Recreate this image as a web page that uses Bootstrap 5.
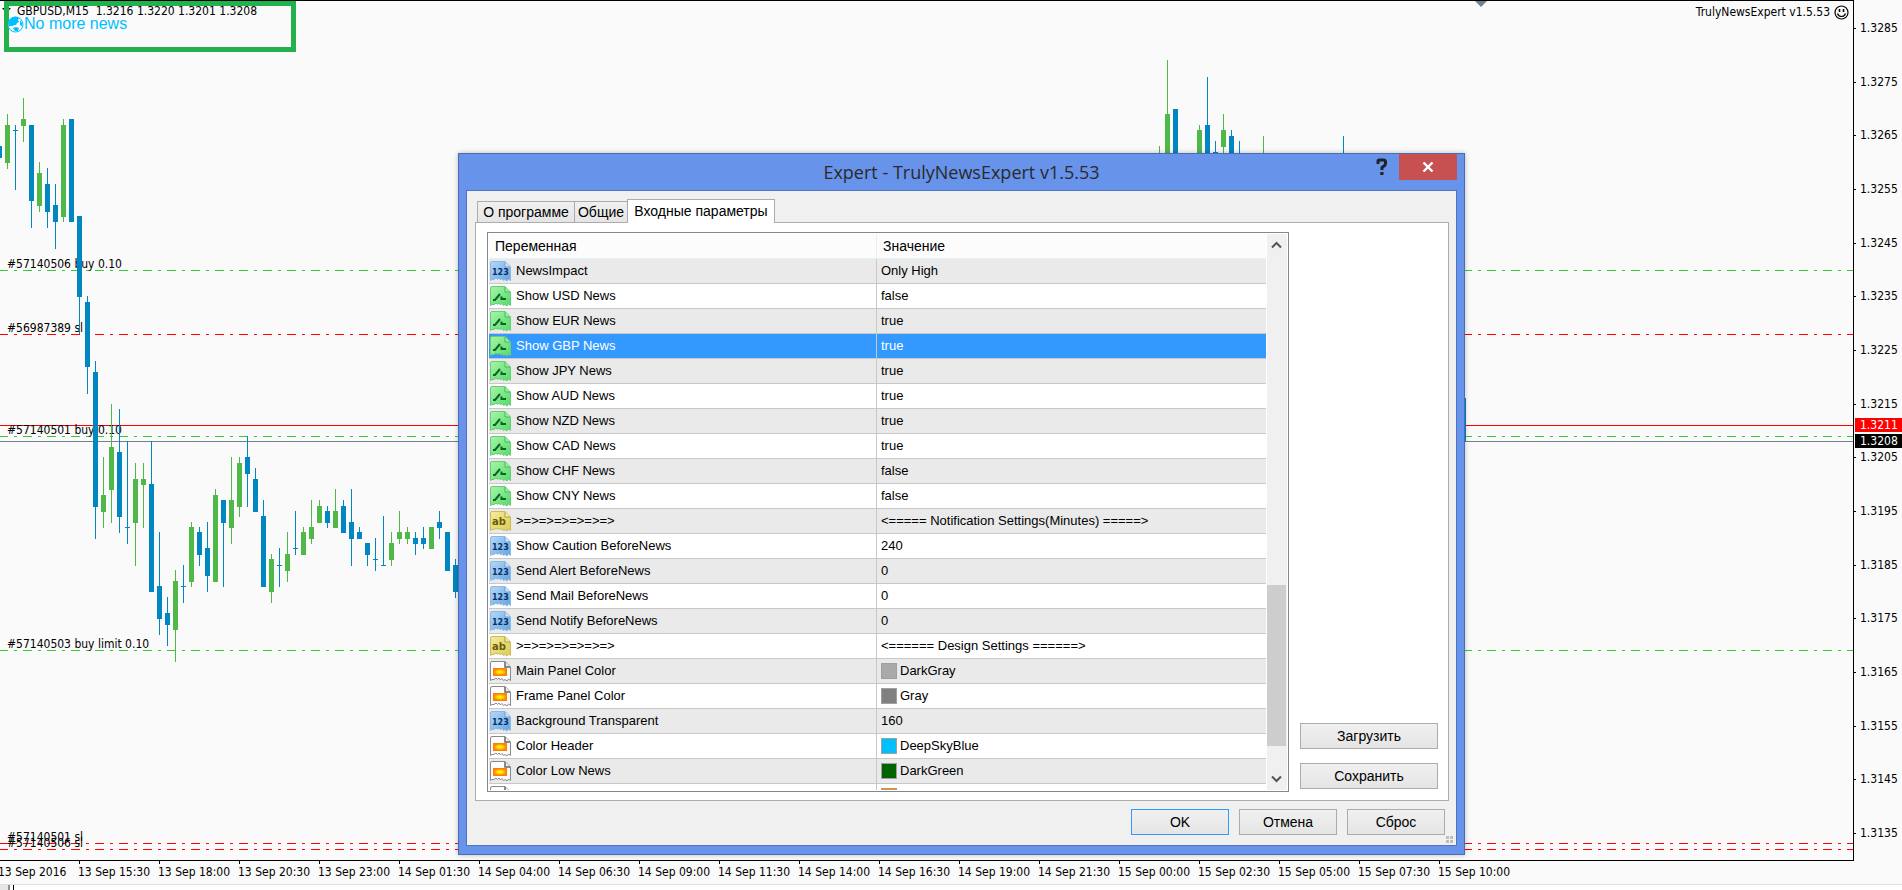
<!DOCTYPE html>
<html lang="ru">
<head>
<meta charset="utf-8">
<meta name="viewport" content="width=device-width, initial-scale=1">
<title>GBPUSD,M15</title>
<link href="https://cdn.jsdelivr.net/npm/bootstrap@5.3.0/dist/css/bootstrap.min.css" rel="stylesheet">
<style>
  body { font-family: "DejaVu Sans Condensed", "DejaVu Sans", sans-serif; font-size: 12px; line-height: 16px; color: #000; background: #fafafa; }
  .plot { border-top: 1px solid #000; border-right: 1px solid #000; border-bottom: 1px solid #000; min-width: 0; }
  .plot-canvas { position: absolute; inset: 0; width: 100%; height: 100%; }
  .plot-canvas text { font-size: 12px; }
  .plot-canvas .level { stroke-width: 1; stroke-dasharray: 9 6 3 6; stroke-dashoffset: 1; }
  .up { fill: #4fb848; }
  .down { fill: #0087c1; }
  .buy { stroke: #32cd32; }
  .stop { stroke: #f00; }
  .quote { left: 17px; top: 2px; white-space: pre; }
  .news-frame { left: 4px; top: 0; width: 292px; height: 51px; border: 5px solid #22b14c; }
  .news-line { left: 7px; top: 13px; font: 16px/20px "Liberation Sans", Arial, sans-serif; color: #00bfff; }
  .menu-mark { left: 2px; top: 7px; }
  .shift-mark { left: 1475px; top: 0; }
  .expert-name { right: 4px; top: 3px; }
  .prices { width: 48px; padding: 20px 0; }
  .prices span { padding-left: 6px; position: relative; }
  .prices span::before { content: ""; position: absolute; left: 0; top: 8px; width: 2px; height: 1px; background: #000; }
  .price-tag { position: absolute; left: 1px; right: 0; height: 14px; line-height: 14px; padding-left: 5px; color: #fff; }
  .ask { top: 418px; background: #f00; }
  .bid { top: 434px; background: #000; }
  .times { height: 23px; margin-left: -2px; overflow: hidden; }
  .times span { width: 80px; flex: none; padding-top: 3px; position: relative; white-space: nowrap; }
  .times span + span::before { content: ""; position: absolute; left: 1px; top: 0; width: 1px; height: 3px; background: #000; }
  .bottom-strip { height: 6px; border-top: 1px solid #e0e0e0; background: #fff; }
  .bottom-strip i { width: 10px; background: #e6e6e6; border-right: 2px solid #909090; }
  .bottom-strip b { width: 1px; margin-left: 3px; background: #000; }

  .dlg { position: absolute; left: 458px; top: 153px; width: 1007px; background: #6793ea; border: 1px solid #4a6cb5; box-shadow: 0 0 5px rgba(0,0,0,.25); padding: 0 7px 8px; font-family: "Liberation Sans", Arial, sans-serif; font-size: 13px; }
  .dlg-head { height: 36px; }
  .dlg-title { font: 18px/36px "Open Sans", "Noto Sans", sans-serif; color: #2a2a2a; }
  .dlg-tools { position: absolute; right: 7px; top: 0; }
  .plain { border: 0; padding: 0; background: none; border-radius: 0; display: flex; align-items: center; justify-content: center; }
  .help { width: 22px; height: 26px; margin-right: 6px; }
  .dlg-close { width: 58px; height: 26px; background: #c75050; }
  .dlg-body { border: 1px solid #4f74c4; background: #f0f0f0; padding: 8px 7px 10px 8px; height: 656px; position: relative; }
  .tabs { padding-left: 2px; height: 23px; }
  .tab-btn { font-size: 14px; height: 21px; padding: 0; border: 1px solid #acacac; border-bottom: 0; background: linear-gradient(#f0f0f0, #e5e5e5); border-radius: 0; color: #000; text-align: center; line-height: 20px; }
  .t1 { width: 98px; margin-right: -1px; }
  .t2 { width: 54px; }
  .t3 { width: 148px; height: 24px; margin: 0 0 -1px -1px; background: #fff; z-index: 1; padding-bottom: 2px; }
  .pane { border: 1px solid #acacac; background: #fff; height: 579px; padding: 9px 10px 8px 11px; gap: 11px; }
  .grid-box { width: 802px; border: 1px solid #828790; padding: 1px; overflow: hidden; height: 560px; }
  .grid-scroll { overflow: hidden; width: 778px; height: 556px; }
  .params { table-layout: fixed; width: 778px; margin: 0; border-collapse: separate; border-spacing: 0; font-size: 13px; line-height: 20px; color: #000; }
  .params th { height: 25px; font-size: 14px; font-weight: 400; padding: 2px 0 2px 6px; background: #fcfcfc; border: 0; border-bottom: 1px solid #e3f1fa; border-right: 1px solid #e3f1fa; line-height: 20px; }
  .params td { height: 25px; padding: 0 0 0 4px; border: 0; border-bottom: 1px solid #c8c8c8; white-space: nowrap; background: #fff; color: #000; vertical-align: middle; }
  .params td:first-child { padding-left: 1px; border-right: 1px solid #c8c8c8; }
  .params tbody tr:nth-child(odd) td { background: #eaeaea; }
  .params tbody tr.picked td { background: #3399ff; color: #fff; }
  .params tr:last-child td { background: #fff; }
  .params svg { margin-right: 5px; flex: none; }
  .swatch { width: 16px; height: 16px; border: 1px solid #a0a0a0; margin-right: 3px; }
  .vbar { width: 20px; margin-left: 1px; background: #f0f0f0; }
  .vbar button { height: 22px; width: 19px; }
  .thumb { width: 19px; height: 161px; margin-top: 329px; background: #cdcdcd; }
  .push { font-size: 14px; line-height: 20px; height: 26px; padding: 0; border: 1px solid #acacac; border-radius: 0; background: linear-gradient(#f0f0f0, #e5e5e5); color: #000; }
  .side { gap: 14px; padding-bottom: 3px; width: 138px; }
  .foot { gap: 10px; padding: 8px 4px 0 0; }
  .foot .push { width: 98px; }
  .foot .ok { border-color: #3399ff; }
  .grip { position: absolute; right: 3px; bottom: 2px; }
</style>
</head>
<body class="vh-100 d-flex flex-column overflow-hidden position-relative">

<svg class="position-absolute" width="0" height="0" aria-hidden="true">
  <defs>
    <linearGradient id="gBlue" x2="1" y2="1"><stop offset="0" stop-color="#b4d8f8"/><stop offset="1" stop-color="#62a4e2"/></linearGradient>
    <linearGradient id="gGreen" x2="1" y2="1"><stop offset="0" stop-color="#a6f5a9"/><stop offset="1" stop-color="#55da6b"/></linearGradient>
    <linearGradient id="gYellow" x2="1" y2="1"><stop offset="0" stop-color="#f4eb9c"/><stop offset="1" stop-color="#dccb58"/></linearGradient>
    <radialGradient id="gSun"><stop offset="0" stop-color="#ffff20"/><stop offset=".5" stop-color="#ffd800"/><stop offset="1" stop-color="#ff8a00"/></radialGradient>
  </defs>
  <symbol id="sheet" viewBox="0 0 21 21">
    <path d="M.5 2Q.5.5 2 .5H15L20.500 6V19.500L18.500 18 17 20 15 18.500 13.500 19.500 12 17.500 10.500 19 9 17 7.500 18.500 6 17 4 18.500 2 18.500.5 19.500Z"/>
  </symbol>
  <symbol id="i-num" viewBox="0 0 21 21">
    <use href="#sheet" width="21" height="21" fill="url(#gBlue)" stroke="#8db9e2"/>
    <path d="M15 .8V6H20" fill="#cfe5f9" stroke="#6fa3d3"/>
    <text x="2" y="14" font-family="DejaVu Sans" font-weight="700" font-size="8" fill="#0b2f63">123</text>
  </symbol>
  <symbol id="i-bool" viewBox="0 0 21 21">
    <use href="#sheet" width="21" height="21" fill="url(#gGreen)" stroke="#6bcb78"/>
    <path d="M15 .8V6H20" fill="#9aeea2" stroke="#4fb660"/>
    <path d="M3 14H5L10 8M11.500 10.500V13H16" fill="none" stroke="#0b6420" stroke-width="2"/>
  </symbol>
  <symbol id="i-str" viewBox="0 0 21 21">
    <use href="#sheet" width="21" height="21" fill="url(#gYellow)" stroke="#cbbb5a"/>
    <path d="M15 .8V6H20" fill="#f5eda9" stroke="#b09f38"/>
    <text x="2" y="14" font-family="DejaVu Sans" font-weight="700" font-size="10" fill="#6a5a0c">ab</text>
  </symbol>
  <symbol id="i-color" viewBox="0 0 21 21">
    <use href="#sheet" width="21" height="21" fill="#fcfcfc" stroke="#8a8a8a"/>
    <path d="M15 .8V6H20" fill="#eee" stroke="#666" stroke-width="1.500"/>
    <rect x="3" y="7" width="14" height="8" fill="#ff7a10"/><rect x="4" y="8" width="12" height="6" fill="url(#gSun)"/>
  </symbol>
</svg>

<main class="d-flex flex-grow-1">
  <section class="plot flex-grow-1 position-relative overflow-hidden">
    <svg class="plot-canvas" id="canvas" shape-rendering="crispEdges"></svg>
    <svg class="menu-mark position-absolute" width="9" height="5"><path d="M0 0H9L4.500 5Z"/></svg>
    <svg class="shift-mark position-absolute" width="12" height="6"><path d="M0 0H12L6 6Z" fill="#708090"/></svg>
    <div class="news-frame position-absolute"></div>
    <div class="quote position-absolute">GBPUSD,M15  1.3216 1.3220 1.3201 1.3208</div>
    <div class="news-line position-absolute d-flex align-items-center">
      <svg width="17" height="17" viewBox="0 0 17 17"><circle cx="8.500" cy="8.500" r="7.500" fill="#fafafa" stroke="#00bfff"/><path d="M1.500 10Q.5 4 5 1.500Q9 0 12 2L11 4 12 6 10 7 9 9 7 9 6 10ZM13 4L15 7 15 10 13 9ZM6 12L9 11 12 12 11 15 8 15Z" fill="#00bfff"/></svg>
      <span>No more news</span>
    </div>
    <div class="expert-name position-absolute d-flex gap-1 align-items-center">
      <span>TrulyNewsExpert v1.5.53</span>
      <svg width="15" height="15" viewBox="0 0 15 15" fill="none" stroke="#000"><circle cx="7.500" cy="7.500" r="6.500" stroke-width="1.200"/><path d="M3.500 8.500Q4.500 11.500 7.500 11.500T11.500 8.500" stroke-width="1.200"/><path d="M5.500 4V7M9.500 4V7" stroke-width="1.600"/></svg>
    </div>
  </section>
  <aside class="prices d-flex flex-column justify-content-between position-relative" id="prices">
    <div class="price-tag ask">1.3211</div>
    <div class="price-tag bid">1.3208</div>
  </aside>
</main>
<div class="times d-flex" id="times"></div>
<div class="bottom-strip d-flex"><i></i><b></b></div>

<div class="dlg" role="dialog" aria-labelledby="dlgTitle">
  <header class="dlg-head text-center">
    <div class="dlg-title" id="dlgTitle">Expert - TrulyNewsExpert v1.5.53</div>
    <div class="dlg-tools d-flex">
      <button class="plain help" aria-label="Help"><svg width="12" height="18" viewBox="0 0 12 18"><path d="M2 6V3.500Q2 2 3.500 2H7.500Q9.500 2 9.500 4V5.500Q9.500 7 8 8L6 9.500V12" fill="none" stroke="#222" stroke-width="3"/><path d="M4.300 14H7.500V17H4.300Z" fill="#222"/></svg></button>
      <button class="plain dlg-close" aria-label="Close"><svg width="12" height="10" viewBox="0 0 12 10"><path d="M1.500.5L10.500 9.500M10.500.5L1.500 9.500" stroke="#fff" stroke-width="2.400"/></svg></button>
    </div>
  </header>
  <div class="dlg-body">
    <nav class="tabs d-flex align-items-end" role="tablist">
      <button class="tab-btn t1" role="tab">О программе</button>
      <button class="tab-btn t2" role="tab">Общие</button>
      <button class="tab-btn t3" role="tab" aria-selected="true">Входные параметры</button>
    </nav>
    <div class="pane d-flex">
      <div class="grid-box d-flex">
        <div class="grid-scroll">
          <table class="params">
            <colgroup><col style="width:388px"><col></colgroup>
            <thead><tr><th>Переменная</th><th>Значение</th></tr></thead>
            <tbody id="rows"></tbody>
          </table>
        </div>
        <div class="vbar d-flex flex-column">
          <button class="plain" aria-label="Up"><svg width="11" height="8" viewBox="0 0 11 8"><path d="M1 6.500L5.500 2 10 6.500" fill="none" stroke="#555" stroke-width="2"/></svg></button>
          <div class="thumb"></div>
          <button class="plain mt-auto" aria-label="Down"><svg width="11" height="8" viewBox="0 0 11 8"><path d="M1 1.500L5.500 6 10 1.500" fill="none" stroke="#555" stroke-width="2"/></svg></button>
        </div>
      </div>
      <div class="side d-flex flex-column justify-content-end">
        <button class="push">Загрузить</button>
        <button class="push">Сохранить</button>
      </div>
    </div>
    <footer class="foot d-flex justify-content-end">
      <button class="push ok">OK</button>
      <button class="push">Отмена</button>
      <button class="push">Сброс</button>
    </footer>
    <svg class="grip" width="7" height="7" fill="#bfbfbf"><path d="M0 0H3V3H0ZM4 0H7V3H4ZM0 4H3V7H0ZM4 4H7V7H4Z"/></svg>
  </div>
</div>

<script>
// Order levels: y, kind, caption
const levels = [
  [270, 'buy', '#57140506 buy 0.10'], [334, 'stop', '#56987389 sl'], [436, 'buy', '#57140501 buy 0.10'],
  [650, 'buy', '#57140503 buy limit 0.10'], [843, 'stop', '#57140501 sl'], [849, 'stop', '#57140506 sl']];
// Candles: slot, direction, high, low, body top, body bottom
const candles = [
  [-1,'d',146,158,146,158],[0,'u',114,169,125,163],[1,'d',125,190,130,131],[2,'u',98,142,119,126],[3,'d',125,228,125,201],
  [4,'u',162,212,173,206],[5,'d',168,228,184,212],[6,'d',184,249,205,222],[7,'u',119,222,125,217],[8,'d',119,222,119,222],
  [9,'d',216,334,216,297],[10,'d',296,394,302,367],[11,'d',361,539,372,507],[12,'u',457,528,495,512],[13,'u',404,523,447,490],
  [14,'d',409,533,452,517],[15,'d',441,544,527,528],[16,'u',463,566,479,523],[17,'u',463,528,479,485],[18,'d',441,592,484,592],
  [19,'d',532,635,586,619],[20,'d',597,646,613,625],[21,'u',570,662,581,630],[22,'d',565,603,586,587],[23,'u',522,587,527,582],
  [24,'d',527,566,532,555],[25,'d',522,592,548,576],[26,'u',489,582,495,582],[27,'d',500,587,500,523],[28,'u',457,544,500,528],
  [29,'u',457,517,463,507],[30,'d',436,507,457,474],[31,'d',468,512,479,512],[32,'d',500,587,516,587],[33,'u',554,603,559,592],
  [34,'d',548,587,565,566],[35,'u',532,582,554,571],[36,'d',511,555,548,549],[37,'u',527,555,532,555],[38,'u',500,544,527,539],
  [39,'u',500,523,506,523],[40,'d',506,528,511,523],[41,'u',489,528,511,528],[42,'d',500,533,506,533],[43,'d',489,566,522,539],
  [44,'d',527,539,532,539],[45,'d',543,566,543,555],[46,'d',538,571,559,560],[47,'d',516,566,565,566],[48,'u',532,566,543,560],
  [49,'u',511,544,532,539],[50,'u',527,544,532,539],[51,'d',532,555,538,544],[52,'d',527,549,538,544],[53,'u',527,549,527,549],
  [54,'d',511,539,522,528],[55,'d',532,571,532,571],[56,'d',559,598,565,592],
  [144,'u',146,170,158,170],[145,'u',60,170,114,170],[146,'d',109,170,109,170],[149,'u',125,170,130,170],[150,'d',77,170,125,170],
  [151,'d',141,170,152,170],[152,'u',114,170,130,147],[153,'d',130,170,136,170],[154,'d',141,170,158,170],[157,'u',136,170,158,170],
  [167,'d',136,170,158,170],[182,'d',398,441,398,441]];

// The plot has a one-pixel top border, so canvas y is one less than chart y
let svg = '<g transform="translate(0 -1)">';
for (const [y, kind] of levels) svg += `<line class="level ${kind}" x1="0" x2="100%" y1="${y + .5}" y2="${y + .5}"/>`;
svg += '<rect width="100%" height="1" y="425" fill="#f00"/><rect width="100%" height="1" y="441" fill="#708090"/>';
for (const [y, , label] of levels) svg += `<text x="7" y="${y - 2}">${label}</text>`;
for (const [k, dir, hi, lo, top, bottom] of candles) {
  const x = 7 + 8 * k, c = dir === 'u' ? 'up' : 'down';
  svg += `<rect class="${c}" x="${x}" y="${hi}" width="1" height="${lo - hi}"/><rect class="${c}" x="${x - 2}" y="${top}" width="5" height="${bottom - top}"/>`;
}
document.getElementById('canvas').innerHTML = svg + '</g>';

let prices = '';
for (let p = 13285; p >= 13135; p -= 10) prices += `<span>${(p / 10000).toFixed(4)}</span>`;
document.getElementById('prices').insertAdjacentHTML('afterbegin', prices);

document.getElementById('times').innerHTML = ['13 Sep 2016','13 Sep 15:30','13 Sep 18:00','13 Sep 20:30','13 Sep 23:00',
  '14 Sep 01:30','14 Sep 04:00','14 Sep 06:30','14 Sep 09:00','14 Sep 11:30','14 Sep 14:00','14 Sep 16:30','14 Sep 19:00','14 Sep 21:30',
  '15 Sep 00:00','15 Sep 02:30','15 Sep 05:00','15 Sep 07:30','15 Sep 10:00'].map(t => `<span>${t}</span>`).join('');

// Parameters: icon, name, value, swatch colour
const params = [
  ['num','NewsImpact','Only High'],['bool','Show USD News','false'],['bool','Show EUR News','true'],['bool','Show GBP News','true'],
  ['bool','Show JPY News','true'],['bool','Show AUD News','true'],['bool','Show NZD News','true'],['bool','Show CAD News','true'],
  ['bool','Show CHF News','false'],['bool','Show CNY News','false'],['str','&gt;=&gt;=&gt;=&gt;=&gt;=&gt;=&gt;','&lt;===== Notification Settings(Minutes) =====&gt;'],
  ['num','Show Caution BeforeNews','240'],['num','Send Alert BeforeNews','0'],['num','Send Mail BeforeNews','0'],['num','Send Notify BeforeNews','0'],
  ['str','&gt;=&gt;=&gt;=&gt;=&gt;=&gt;=&gt;','&lt;====== Design Settings ======&gt;'],['color','Main Panel Color','DarkGray','#a9a9a9'],
  ['color','Frame Panel Color','Gray','#808080'],['num','Background Transparent','160'],['color','Color Header','DeepSkyBlue','#00bfff'],
  ['color','Color Low News','DarkGreen','#006400'],['color','','','#ff8c00']];
document.getElementById('rows').innerHTML = params.map(([icon, name, value, color], i) =>
  `<tr${i === 3 ? ' class="picked"' : ''}><td><div class="d-flex align-items-center"><svg width="21" height="21"><use href="#i-${icon}"/></svg>${name}</div></td>` +
  `<td><div class="d-flex align-items-center">${color ? `<span class="swatch" style="background:${color}"></span>` : ''}${value}</div></td></tr>`).join('');
</script>
<script src="https://cdn.jsdelivr.net/npm/bootstrap@5.3.0/dist/js/bootstrap.bundle.min.js"></script>
</body>
</html>
